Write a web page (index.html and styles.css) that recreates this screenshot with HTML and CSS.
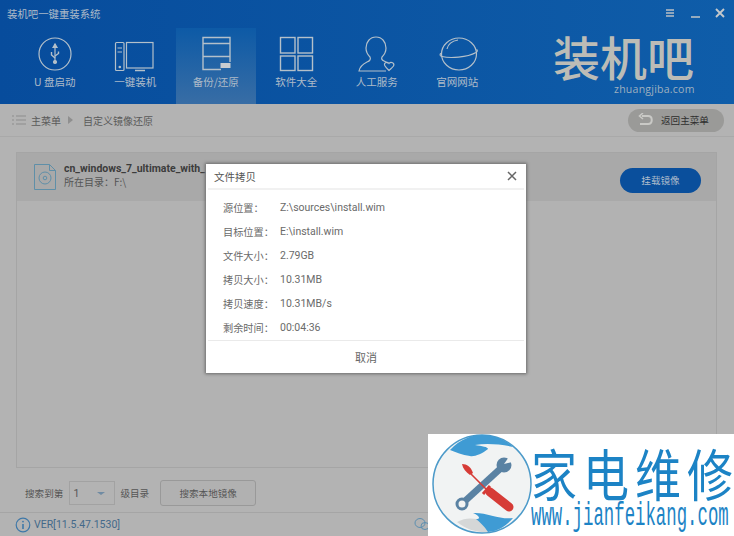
FILE: index.html
```html
<!DOCTYPE html>
<html lang="zh-CN">
<head>
<meta charset="utf-8">
<title>装机吧一键重装系统</title>
<link rel="stylesheet" href="styles.css">
</head>
<body>
<div class="app">
  <header class="header">
    <div class="titlebar">
      <span class="app-title">装机吧一键重装系统</span>
      <div class="win-controls">
        <svg width="12" height="12" viewBox="0 0 12 12"><path d="M2 3h8M2 6h8M2 9h8" stroke="#b9bfc4" stroke-width="1.5"/></svg>
        <svg width="12" height="12" viewBox="0 0 12 12"><path d="M2 10h9" stroke="#b9bfc4" stroke-width="1.6"/></svg>
        <svg width="12" height="12" viewBox="0 0 12 12"><path d="M2 2l8 8M10 2l-8 8" stroke="#c4c8cb" stroke-width="1.9"/></svg>
      </div>
    </div>
    <div class="navrow">
      <nav class="nav">
        <a class="tab">
          <svg class="ico" width="50" height="50" viewBox="0 0 50 50" fill="none" stroke="#b4c0ca" stroke-width="1.2"><circle cx="25" cy="26" r="16"/><path d="M25 16v18"/><path d="M23 19.500l2-3.500 2 3.500z" fill="#b4c0ca"/><path d="M25 30l-3.500-3v-3M25 28l3.500-2.500v-2" stroke-width="1.400"/><circle cx="25" cy="34" r="1.500" fill="#b4c0ca"/></svg>
          <span>U 盘启动</span>
        </a>
        <a class="tab">
          <svg class="ico" width="50" height="50" viewBox="0 0 50 50" fill="none" stroke="#b4c0ca" stroke-width="1.2"><rect x="5.500" y="14.500" width="8.500" height="28" rx="1"/><path d="M7.500 20h4.500M7.500 24h4.500"/><circle cx="9.800" cy="39" r=".7"/><rect x="16.500" y="14.500" width="26.500" height="25.500"/><path d="M25 42.500h10" stroke-width="1.500"/></svg>
          <span>一键装机</span>
        </a>
        <a class="tab tab-active">
          <svg class="ico" width="50" height="50" viewBox="0 0 50 50" fill="none" stroke="#b4c0ca" stroke-width="1.400"><path d="M39 34V9.500H12v32h18"/><path d="M12 15.500h27M12 28.500h27"/><rect x="29.500" y="35" width="10" height="5" fill="#c8ccd0" stroke="none"/></svg>
          <span>备份/还原</span>
        </a>
        <a class="tab">
          <svg class="ico" width="50" height="50" viewBox="0 0 50 50" fill="none" stroke="#b4c0ca" stroke-width="1.400"><rect x="9.500" y="9.500" width="14.500" height="15.500"/><rect x="27" y="9.500" width="14.500" height="15.500"/><rect x="9.500" y="28" width="14.500" height="14.500"/><rect x="27" y="28" width="14.500" height="14.500"/></svg>
          <span>软件大全</span>
        </a>
        <a class="tab">
          <svg class="ico" width="50" height="50" viewBox="0 0 50 50" fill="none" stroke="#b4c0ca" stroke-width="1.200"><path d="M24 9c-6 0-10 5-10 11 0 4 2 7 4 9 1 2 0 4-3 5-4 2-7 4-8 9h27"/><path d="M24 9c6 0 10 5 10 11 0 4-2 7-4 9-1 2 0 3 2 4l4 2"/><path d="M33 38c-2-3 2-5 4-2.500 2-2.500 6-.5 4.500 2.500-1 1.500-3 3-4.500 4.500-1.500-1.500-3-3-4-4.500z"/></svg>
          <span>人工服务</span>
        </a>
        <a class="tab">
          <svg class="ico" width="50" height="50" viewBox="0 0 50 50" fill="none" stroke="#b4c0ca" stroke-width="1.200"><ellipse cx="27" cy="26" rx="17.500" ry="16"/><path d="M9.500 25c-2 1-2 3 .5 3.500 8 2 25 1 34-4 1.500-1 1.800-2.500.5-3"/><path d="M15 21c1-5 5-8 11-9"/></svg>
          <span>官网网站</span>
        </a>
      </nav>
      <div class="logo">
        <div class="logo-cn">装机吧</div>
        <div class="logo-en">zhuangjiba.com</div>
      </div>
    </div>
  </header>

  <div class="crumbbar">
    <svg width="14" height="12" viewBox="0 0 14 12" fill="none" stroke="#8d8d8d"><path d="M4 2h10M4 6h10M4 10h10M0 2h2M0 6h2M0 10h2"/></svg>
    <span class="crumb">主菜单</span>
    <span class="crumb-arrow"></span>
    <span class="crumb">自定义镜像还原</span>
    <button class="back-btn">
      <svg width="16" height="14" viewBox="0 0 16 14" fill="none" stroke="#c9c9c6" stroke-width="2"><path d="M5 3h6c5 0 5 8 0 8H3"/><path d="M6 0L2.500 3 6 6" stroke-width="1.600"/></svg>
      <span>返回主菜单</span>
    </button>
  </div>

  <main class="main">
    <section class="panel">
      <div class="file-row">
        <svg class="file-ico" width="24" height="28" viewBox="0 0 24 28" fill="none" stroke="#5f8fa8" stroke-width="1"><path d="M1.500 1.500h15l6 6v19h-21z"/><path d="M16.500 1.500v6h6"/><circle cx="12" cy="15" r="6"/><circle cx="12" cy="15" r="1.800"/></svg>
        <div class="file-text">
          <div class="file-name">cn_windows_7_ultimate_with_</div>
          <div class="file-dir">所在目录：F:\</div>
        </div>
        <button class="mount-btn">挂载镜像</button>
      </div>
    </section>
    <div class="search-row">
      <span>搜索到第</span>
      <div class="select"><span>1</span><i class="caret"></i></div>
      <span>级目录</span>
      <button class="search-btn">搜索本地镜像</button>
    </div>
  </main>

  <footer class="footer">
    <svg width="16" height="16" viewBox="0 0 16 16" fill="none" stroke="#3f78a8" stroke-width="1.200"><circle cx="8" cy="8" r="6.800"/><path d="M8 7v5" stroke-width="1.600"/><circle cx="8" cy="4.600" r=".9" fill="#3f78a8" stroke="none"/></svg>
    <span class="ver">VER[11.5.47.1530]</span>
    <svg class="chat" width="16" height="14" viewBox="0 0 16 14" fill="none" stroke="#5d8fb0"><ellipse cx="6" cy="6" rx="5" ry="4.500"/><ellipse cx="11" cy="9" rx="4" ry="3.500"/></svg>
  </footer>

  <div class="dialog">
    <div class="dialog-head">
      <span>文件拷贝</span>
      <svg width="10" height="10" viewBox="0 0 10 10" fill="none" stroke="#666" stroke-width="1.500"><path d="M1 1l8 8M9 1l-8 8"/></svg>
    </div>
    <dl class="dialog-body">
      <div class="info"><dt>源位置：</dt><dd>Z:\sources\install.wim</dd></div>
      <div class="info"><dt>目标位置：</dt><dd>E:\install.wim</dd></div>
      <div class="info"><dt>文件大小：</dt><dd>2.79GB</dd></div>
      <div class="info"><dt>拷贝大小：</dt><dd>10.31MB</dd></div>
      <div class="info"><dt>拷贝速度：</dt><dd>10.31MB/s</dd></div>
      <div class="info"><dt>剩余时间：</dt><dd>00:04:36</dd></div>
    </dl>
    <div class="dialog-foot">取消</div>
  </div>

  <div class="watermark">
    <svg class="wm-logo" width="104" height="102" viewBox="0 0 104 102">
      <circle cx="52" cy="50" r="49" fill="#f1f3f3" stroke="#4c9ac9" stroke-width="1.500"/>
      <path d="M20 16C30 5 42 1 52 1 65 1 76 6 83 13 70 10 56 9 45 11 52 12 58 13 58 15 52 20 44 23 40 22 32 21 26 18 20 16z" fill="#3f9bd4"/>
      <path d="M27 88C34 84 40 84 47 85 52 89 56 93 60 98 46 99 36 95 27 88z" fill="#d5d7d7"/>
      <path d="M43 79C56 78 70 86 83 84 76 92 68 97 58 98 54 92 50 88 46 85 52 85 48 81 43 79z" fill="#3f9bd4"/>
      <path d="M35 67L70 35" stroke="#5a82a3" stroke-width="6.500"/>
      <circle cx="32" cy="70" r="5" fill="#f1f3f3" stroke="#5a82a3" stroke-width="3"/>
      <circle cx="74" cy="31" r="7.500" fill="#5a82a3"/>
      <path d="M74 30L81 20 87 27z" fill="#f1f3f3"/>
      <path d="M32 30C37 30 41 33 43 39L40 41C36 38 33 35 32 30z" fill="#d63b36"/>
      <path d="M41 40L56 55" stroke="#d63b36" stroke-width="1.600"/>
      <path d="M53 60L60 52" stroke="#d63b36" stroke-width="3"/>
      <path d="M60 58L79 73" stroke="#d63b36" stroke-width="9" stroke-linecap="round"/>
    </svg>
    <div class="wm-text">
      <div class="wm-cn"><span>家</span><span>电</span><span>维</span><span>修</span></div>
      <div class="wm-url">www.jianfeikang.com</div>
    </div>
  </div>
</div>
</body>
</html>
```

FILE: styles.css
```css
* { box-sizing: border-box; }
html, body { margin: 0; padding: 0; }
body { font-family: "Noto Sans CJK SC", "Open Sans", sans-serif; font-size: 11px; color: #555; }
.app { position: relative; width: 734px; height: 536px; overflow: hidden; display: flex; flex-direction: column; background: #b3b3b3; }

.header { height: 104px; flex: none; background: linear-gradient(90deg, #074c9c, #0f5da9); display: flex; flex-direction: column; }
.titlebar { height: 28px; flex: none; padding: 0 7px; display: flex; align-items: center; justify-content: space-between; }
.app-title { font-size: 10.400px; color: #aebbc8; margin-top: -2px; }
.win-controls { display: flex; gap: 13px; padding-right: 1px; margin-top: -2px; }
.navrow { flex: 1; display: flex; justify-content: space-between; }
.nav { display: flex; padding-left: 14.500px; }
.tab { width: 80.500px; display: flex; flex-direction: column; align-items: center; color: #aebbc8; font-size: 10.500px; line-height: 16px; }
.tab .ico { flex: none; }
.tab span { margin-top: -4px; }
.tab-active { background: linear-gradient(180deg, #0d5aa6, #386da5); }

.logo { width: 181px; padding-top: 2px; }
.logo-cn { font-size: 47px; line-height: 52px; font-weight: 500; color: #bcbcb6; }
.logo-en { font-family: "Open Sans", sans-serif; font-size: 10.500px; line-height: 12px; color: #9fb0bf; padding-left: 61px; letter-spacing: .25px; margin-top: 1px; }

.crumbbar { height: 33px; flex: none; display: flex; align-items: center; padding: 0 12px; border-bottom: 1px solid #a9a9a9; color: #5a5a5a; }
.crumb { font-size: 10px; }
.crumbbar > svg + .crumb { margin-left: 5px; }
.crumb-arrow { margin: 0 10px 0 7px; border-left: 5px solid #8f8f8f; border-top: 4px solid transparent; border-bottom: 4px solid transparent; }
.back-btn { margin-left: auto; width: 96px; height: 23px; margin-right: -2px; border: 0; border-radius: 12px; background: #9a9a98; display: flex; align-items: center; gap: 8px; padding: 0 0 0 9px; font: 9.600px "Noto Sans CJK SC", sans-serif; color: #2e2e2e; }

.main { flex: 1; padding: 15px 17px 0 16px; display: flex; flex-direction: column; }
.panel { height: 316px; flex: none; border: 1px solid #a5a5a5; background: #b2b2b2; }
.file-row { height: 48px; background: #a9a9a9; display: flex; align-items: center; padding: 0 15px 0 16px; }
.file-ico { margin-right: 7px; margin-top: -1px; }
.file-text { flex: 1; line-height: 13px; margin-top: -4px; }
.file-name { font-family: Roboto, sans-serif; font-weight: 700; font-size: 10.500px; color: #3c3c3c; }
.file-dir { font-size: 10px; color: #555; }
.mount-btn { width: 81px; height: 25px; margin-top: 6px; border: 0; border-radius: 13px; background: #0a4f9c; color: #aebccb; font: 9.600px "Noto Sans CJK SC", sans-serif; }

.search-row { display: flex; align-items: center; margin-top: 12px; padding-left: 9px; height: 26px; font-size: 9.600px; color: #555; }
.select { width: 46px; height: 24px; margin: 0 5px 0 6px; border: 1px solid #a2a2a2; display: flex; align-items: center; justify-content: space-between; padding: 0 9px 0 3px; font-family: Roboto, sans-serif; font-size: 10.500px; }
.caret { border-top: 3px solid #6f8ba3; border-left: 4px solid transparent; border-right: 4px solid transparent; }
.search-btn { margin-left: 11px; width: 96px; height: 26px; border: 1px solid #999; border-radius: 3px; background: #b1b1b1; font: 9.600px "Noto Sans CJK SC", sans-serif; color: #555; }

.footer { height: 24px; flex: none; border-top: 1px solid #a5a5a5; display: flex; align-items: center; padding-left: 15px; gap: 3px; }
.ver { font-family: Roboto, sans-serif; font-size: 10.500px; color: #43698a; }
.chat { position: absolute; left: 414px; top: 517px; }

.dialog { position: absolute; left: 206px; top: 164px; width: 320px; height: 209px; background: #fff; box-shadow: 0 0 3px 1px #6a6a6a; display: flex; flex-direction: column; }
.dialog-head { height: 26px; margin: 0 2px; flex: none; border-bottom: 2px solid #f1f1f1; display: flex; align-items: center; justify-content: space-between; padding: 0 7px 0 6px; font-size: 10.500px; color: #555; }
.dialog-body { flex: 1; margin: 0; padding: 5px 0 0 17px; }
.info { height: 24px; display: flex; align-items: center; font-size: 10.200px; color: #6a6a6a; }
.info dt { width: 57px; flex: none; }
.info dd { margin: 0; font-family: Roboto, sans-serif; font-size: 10.500px; }
.dialog-foot { height: 33px; margin: 0 2px; flex: none; border-top: 1px solid #eaeaea; display: flex; align-items: center; justify-content: center; font-size: 11px; color: #666; }

.watermark { position: absolute; left: 428px; top: 434px; width: 306px; height: 102px; background: #fff; display: flex; }
.wm-logo { flex: none; margin-left: 2px; }
.wm-text { flex: 1; min-width: 0; margin-left: -3px; color: #1c83c5; }
.wm-cn { display: flex; justify-content: space-between; width: 202px; height: 66px; font-size: 46px; line-height: 62px; transform: scaleY(1.220); transform-origin: 50% 0; }
.wm-url { font-family: "Liberation Mono", monospace; font-size: 34px; line-height: 32px; width: 400px; white-space: nowrap; transform: scaleX(.510); transform-origin: 0 50%; }
```
